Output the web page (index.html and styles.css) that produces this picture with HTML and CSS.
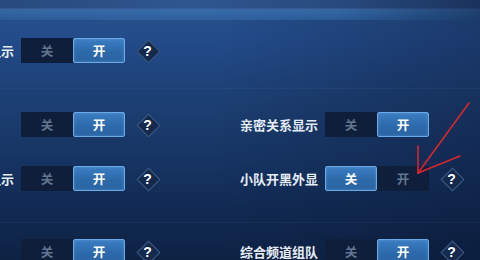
FILE: index.html
```html
<!DOCTYPE html>
<html lang="zh">
<head>
<meta charset="utf-8">
<link rel="stylesheet" href="styles.css">
</head>
<body>
<div class="screen">
  <div class="topbar"></div>
  <div class="panel">
    <section class="group group-1">
      <div class="row">
        <div class="item">
          <span class="label">荣誉战绩显示</span>
          <div class="toggle"><span class="seg off">关</span><span class="seg on">开</span></div>
          <span class="help">?</span>
        </div>
        <div class="item"></div>
      </div>
    </section>
    <section class="group group-2">
      <div class="row">
        <div class="item">
          <span class="label">语音聊天</span>
          <div class="toggle"><span class="seg off">关</span><span class="seg on">开</span></div>
          <span class="help">?</span>
        </div>
        <div class="item">
          <span class="label">亲密关系显示</span>
          <div class="toggle"><span class="seg off">关</span><span class="seg on">开</span></div>
          <span class="help hidden">?</span>
        </div>
      </div>
      <div class="row row-gap">
        <div class="item">
          <span class="label">个性装扮显示</span>
          <div class="toggle"><span class="seg off">关</span><span class="seg on">开</span></div>
          <span class="help">?</span>
        </div>
        <div class="item">
          <span class="label">小队开黑外显</span>
          <div class="toggle"><span class="seg on">关</span><span class="seg off">开</span></div>
          <span class="help">?</span>
        </div>
      </div>
    </section>
    <section class="group group-3">
      <div class="row">
        <div class="item">
          <span class="label">组队邀请</span>
          <div class="toggle"><span class="seg off">关</span><span class="seg on">开</span></div>
          <span class="help">?</span>
        </div>
        <div class="item">
          <span class="label">综合频道组队</span>
          <div class="toggle"><span class="seg off">关</span><span class="seg on">开</span></div>
          <span class="help">?</span>
        </div>
      </div>
    </section>
  </div>
  <svg class="arrow" width="480" height="260" viewBox="0 0 480 260">
    <g fill="none" stroke="#d9252e" stroke-width="1.6" stroke-linecap="round">
      <line x1="469" y1="103" x2="418" y2="173"/>
      <line x1="418" y1="173" x2="418" y2="146"/>
      <line x1="418" y1="173" x2="460" y2="156"/>
    </g>
  </svg>
</div>
</body>
</html>
```

FILE: styles.css
```css
* { box-sizing: border-box; }

html, body {
  margin: 0;
  padding: 0;
  width: 480px;
  height: 260px;
  overflow: hidden;
}

body {
  font-family: "Noto Sans CJK SC", "Noto Sans", sans-serif;
  background:
    linear-gradient(90deg, rgba(10, 22, 50, 0) 45%, rgba(10, 22, 50, 0.35) 100%),
    linear-gradient(180deg, #27528c 0px, #234b8a 40px, #1c3f72 100px, #163463 160px, #112a52 210px, #0e2244 260px);
}

.screen {
  position: relative;
  width: 480px;
  height: 260px;
  overflow: hidden;
}

.topbar {
  height: 20px;
  background:
    linear-gradient(90deg, rgba(20, 40, 80, 0) 0%, rgba(60, 110, 175, 0.35) 40%, rgba(20, 40, 80, 0) 70%, rgba(12, 28, 60, 0.5) 100%),
    linear-gradient(180deg, #284a7e 0px, #284a7e 8px, #3a64a0 9px, #3266a3 12px, #2a5a96 20px);
}

.panel {
  margin-left: -64px;
  width: 608px;
}

.group {
  border-bottom: 1px solid rgba(80, 130, 190, 0.1);
}

.group-1 { padding: 18px 0 25px; }
.group-2 { padding: 23px 0 31px; }
.group-3 { padding: 16px 0 0; border-bottom: 0; }

.row {
  display: grid;
  grid-template-columns: 304px 304px;
  height: 25px;
}

.row-gap { margin-top: 29px; }

.item {
  display: flex;
  align-items: center;
  height: 25px;
}

.label {
  width: 85px;
  flex: none;
  color: #e6edf7;
  font-size: 13px;
  font-weight: 700;
  white-space: nowrap;
  overflow: hidden;
  padding-right: 8px;
}

.toggle {
  display: flex;
  height: 25px;
  width: 104px;
  flex: none;
}

.seg {
  width: 52px;
  height: 25px;
  display: flex;
  align-items: center;
  justify-content: center;
  font-size: 12.5px;
  font-weight: 700;
}

.seg.off {
  background: #0f1f3b;
  color: #627590;
}

.seg.on {
  background: linear-gradient(180deg, #3a7ec2 0%, #2d6aab 55%, #2a64a3 100%);
  border: 1px solid #6aa8e6;
  border-radius: 2px;
  color: #ffffff;
  box-shadow: inset 0 0 3px rgba(150, 200, 255, 0.35);
}

.help {
  position: relative;
  width: 21px;
  height: 21px;
  margin-left: 12px;
  flex: none;
  display: flex;
  align-items: center;
  justify-content: center;
  color: #ffffff;
  font-family: "Liberation Sans", Arial, sans-serif;
  font-size: 14px;
  font-weight: 700;
  z-index: 0;
}

.help::before {
  content: "";
  position: absolute;
  left: 3px;
  top: 3px;
  width: 15px;
  height: 15px;
  transform: rotate(45deg);
  background: #14294b;
  border: 1px solid #3b5d88;
  z-index: -1;
}

.help.hidden { visibility: hidden; }

.arrow {
  position: absolute;
  left: 0;
  top: 0;
  pointer-events: none;
}
```
